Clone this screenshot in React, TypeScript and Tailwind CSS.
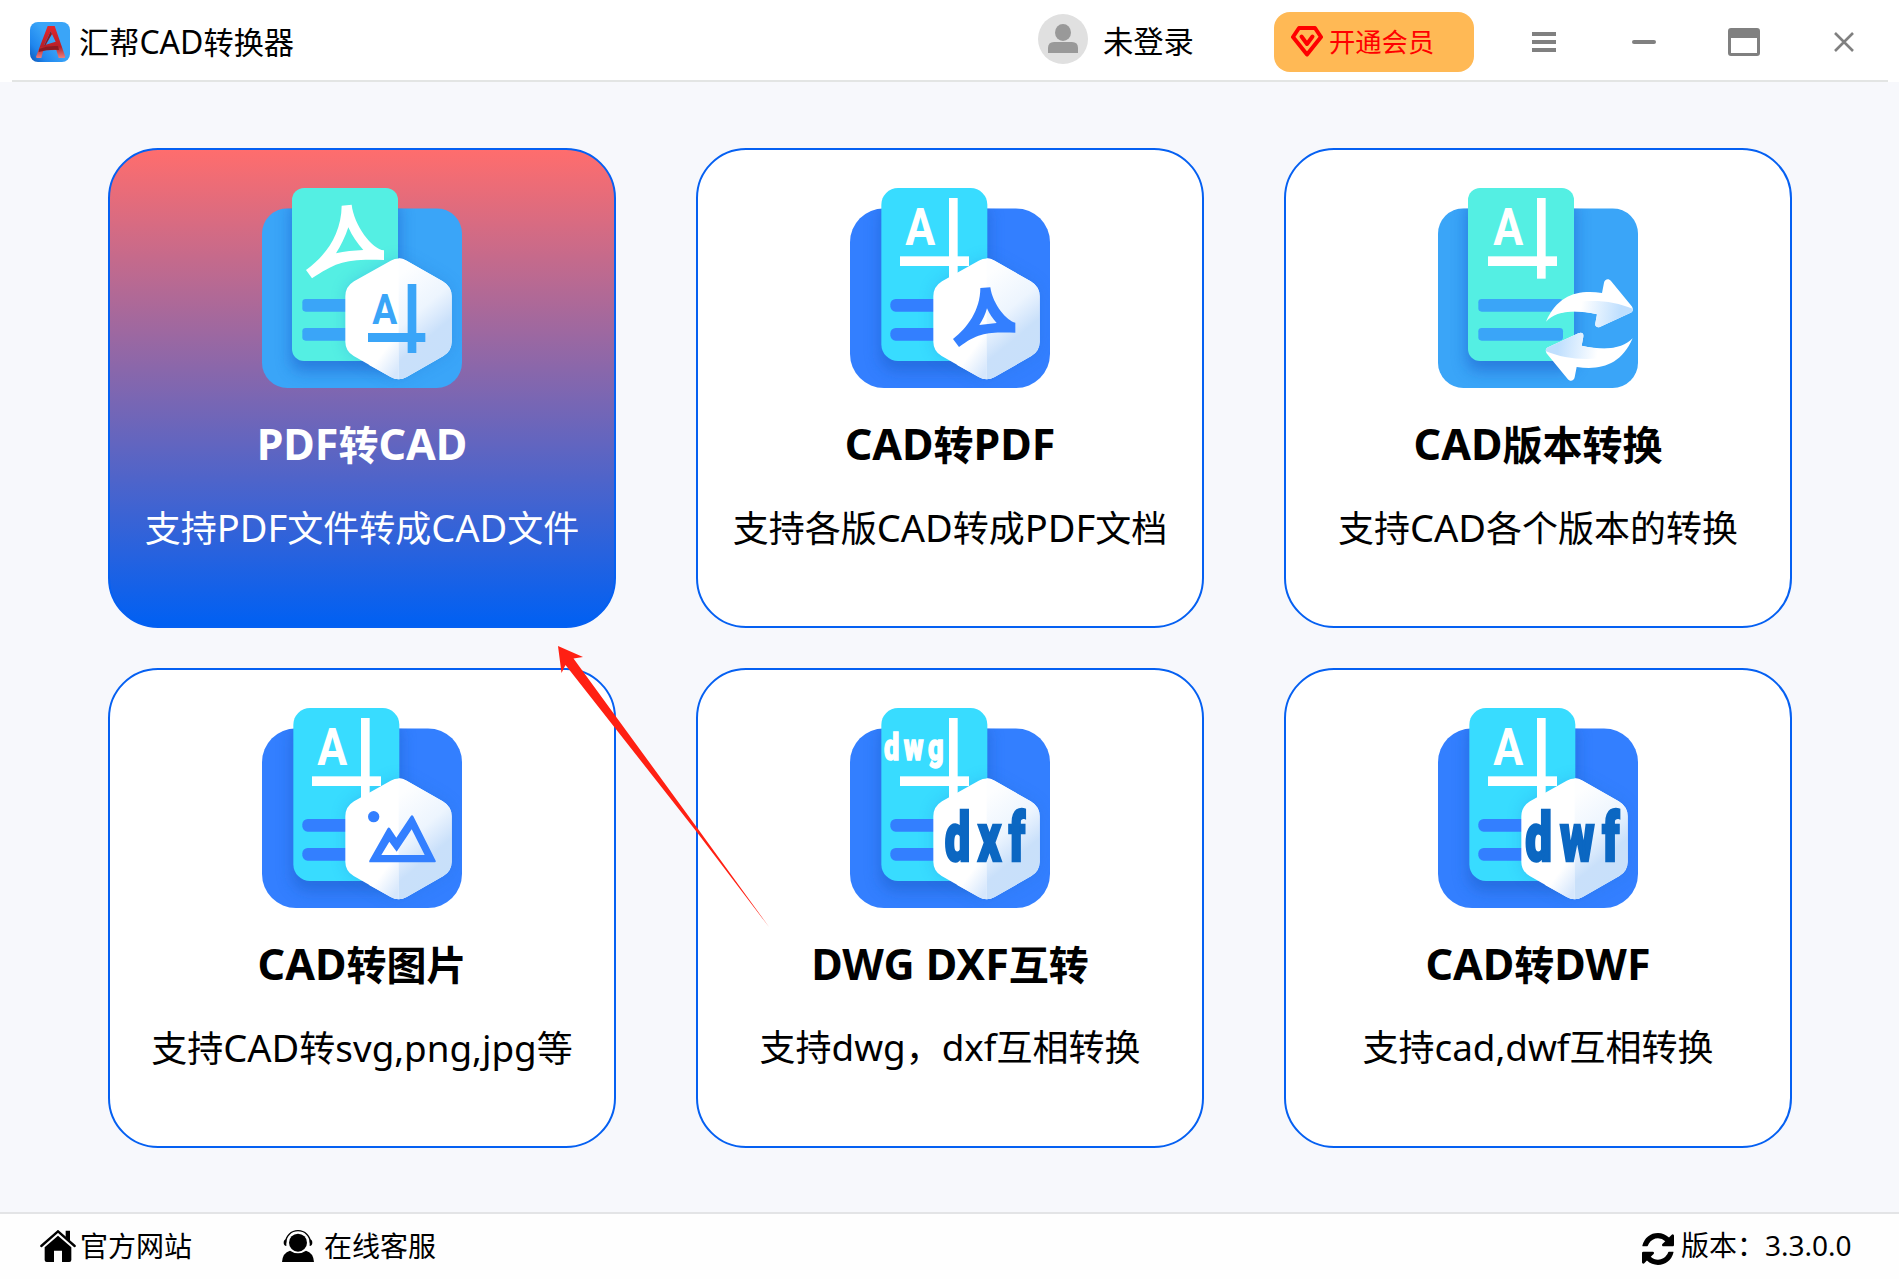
import React from 'react';

type IconKind = 'pdf' | 'toPdf' | 'version' | 'image' | 'dxf' | 'dwf';

const HEX =
  'M386 218 Q410 205 434 218 L542 280 Q569 296 569 325 L569 461 Q569 489 544 504 L434 567 Q410 581 386 567 L275 504 Q250 489 250 461 L250 325 Q250 296 276 280 Z';
const HEX_RIGHT =
  'M410 211 Q422 211 434 218 L542 280 Q569 296 569 325 L569 461 Q569 489 544 504 L434 567 Q422 574 410 574 Z';

function Swoosh({ fill }: { fill: string }) {
  return (
    <path
      fill={fill}
      fillRule="evenodd"
      d="M239 53 L269 50 C276 112 330 184 366 187 L366 216 C250 212 225 222 150 271 L132 246 C190 204 238 140 239 53 Z M259 118 C250 146 236 174 222 196 C248 190 275 187 304 186 C286 166 270 144 259 118 Z"
    />
  );
}

function Word({ text, x, y, width, size, fill }: { text: string; x: number; y: number; width: number; size: number; fill: string }) {
  return (
    <text
      x={x}
      y={y}
      fill={fill}
      stroke={fill}
      strokeWidth={size / 26}
      fontFamily="Roboto, 'Liberation Sans', sans-serif"
      fontWeight="900"
      fontSize={size}
      letterSpacing={size / 6}
      textLength={width}
      lengthAdjust="spacingAndGlyphs"
    >
      {text}
    </text>
  );
}

function FileIcon({ kind }: { kind: IconKind }) {
  const teal = kind === 'pdf' || kind === 'version';
  const base = teal ? '#3aa5f8' : '#337fff';
  const page = teal ? '#54efe3' : '#38dcff';
  const px = teal ? 90 : 94;
  const r = teal ? 36 : 50;
  const id = (s: string) => `${kind}-${s}`;
  return (
    <svg className="block size-[200px] overflow-visible" viewBox="0 0 600 600">
      <defs>
        <clipPath id={id('base')}>
          <rect y="61" width="600" height="539" rx={teal ? 76 : 102} />
        </clipPath>
        <clipPath id={id('page')}>
          <rect x={px} width="318" height="519" rx={r} />
        </clipPath>
        <filter id={id('blur')} x="-30%" y="-30%" width="160%" height="160%">
          <feGaussianBlur stdDeviation="22" />
        </filter>
        <linearGradient id={id('side')} gradientUnits="userSpaceOnUse" x1="420" y1="255" x2="590" y2="460">
          <stop offset="0" stopColor="#fdfeff" />
          <stop offset="0.45" stopColor="#edf5fe" />
          <stop offset="0.62" stopColor="#d9e9fc" />
          <stop offset="0.75" stopColor="#c9e0fa" />
          <stop offset="1" stopColor="#c8e0fa" />
        </linearGradient>
        <linearGradient id={id('fold')} gradientUnits="userSpaceOnUse" x1="365" y1="490" x2="420" y2="530">
          <stop offset="0" stopColor="#ffffff" />
          <stop offset="1" stopColor="#d6e7fc" />
        </linearGradient>
        <linearGradient id={id('arrow')} gradientUnits="userSpaceOnUse" x1="430" y1="350" x2="570" y2="370">
          <stop offset="0" stopColor="#ffffff" />
          <stop offset="0.85" stopColor="#bfdffe" />
        </linearGradient>
      </defs>
      <g clipPath={`url(#${id('base')})`}>
        <rect y="61" width="600" height="539" fill={base} />
        <rect x={px - 4} y="40" width="326" height="510" rx={r} fill="#1c62cc" opacity="0.6" filter={`url(#${id('blur')})`} />
        {kind !== 'version' && <path d={HEX} fill="#1c6fcf" opacity="0.25" filter={`url(#${id('blur')})`} />}
      </g>
      <rect x={px} width="318" height="519" rx={r} fill={page} />
      {kind !== 'version' && (
        <g clipPath={`url(#${id('page')})`}>
          <path d={HEX} fill="#1c7fdf" opacity="0.25" filter={`url(#${id('blur')})`} />
        </g>
      )}
      <rect x="121" y="333" width="254" height="38" rx={teal ? 10 : 16} fill={base} />
      <rect x="121" y="420" width="254" height="38" rx={teal ? 10 : 16} fill={base} />

      {kind === 'pdf' ? (
        <Swoosh fill="#fff" />
      ) : (
        <g fill="#fff">
          <rect x="297" y="30" width="26" height="242" />
          <rect x="150" y="205" width="207" height="29" />
          {kind !== 'dxf' && (
            <text x="166" y="171" fontFamily="Roboto, sans-serif" fontWeight="700" fontSize="153" textLength="90" lengthAdjust="spacingAndGlyphs">
              A
            </text>
          )}
        </g>
      )}
      {kind === 'dxf' && <Word text="dwg" x={102} y={156} width={192} size={113} fill="#fff" />}

      {kind === 'version' ? (
        <>
          {[0, 180].map((a) => (
            <g key={a} transform={`rotate(${a} 454 426)`}>
              <path
                fill="#fff"
                d="M324 401 C360 320 420 305 492 315 L498 284 C500 273 512 270 519 279 L580 353 C587 362 586 370 578 374 L487 416 C477 420 470 416 472 406 L477 379 C400 362 352 372 324 401 Z"
              />
              <path
                fill={`url(#${id('arrow')})`}
                d="M400 344 C470 333 530 340 584 362 C585 368 583 372 578 374 L487 416 C477 420 470 416 472 406 L477 379 C440 370 400 366 370 374 Z"
              />
            </g>
          ))}
        </>
      ) : (
        <>
          <path d={HEX} fill="#fff" />
          <path d="M410 430 L320 530 L386 567 Q398 574 410 574 Z" fill={`url(#${id('fold')})`} />
          <path d={HEX_RIGHT} fill={`url(#${id('side')})`} />
        </>
      )}

      {kind === 'pdf' && (
        <g fill={base}>
          <rect x="437" y="288" width="26" height="207" />
          <rect x="318" y="435" width="172" height="27" />
          <text x="331" y="408" fontFamily="Roboto, sans-serif" fontWeight="700" fontSize="129" textLength="75" lengthAdjust="spacingAndGlyphs">
            A
          </text>
        </g>
      )}
      {kind === 'toPdf' && (
        <path
          fill={base}
          fillRule="evenodd"
          d="M391 300 L421 298 C428 350 472 400 496 404 L496 434 C415 433 388 432 327 477 L309 453 C352 420 391 366 391 300 Z M411 361 C406 380 398 396 388 411 L440 405 C428 392 418 378 411 361 Z"
        />
      )}
      {kind === 'image' && (
        <g fill={base}>
          <circle cx="335" cy="326" r="17" />
          <path
            fillRule="evenodd"
            d="M322 463 Q321 459 323 456 L376 362 Q380 356 384 361 L403 389 L446 325 Q450 319 454 325 L521 458 Q523 462 519 463 Z M358 441 L488 441 L449 364 L404 431 L382 401 Z"
          />
        </g>
      )}
      {kind === 'dxf' && <Word text="dxf" x={284} y={460} width={264} size={203} fill="#0b67c2" />}
      {kind === 'dwf' && <Word text="dwf" x={262} y={460} width={306} size={203} fill="#0b67c2" />}
    </svg>
  );
}

/** Gives the Latin capitals and small letters their own sizes beside the Chinese text. */
function Mixed({ text, upper, lower }: { text: string; upper: string; lower?: string }) {
  return (
    <>
      {text.split(/([A-Z][A-Z ]*|[a-z,]+)/).map((run, i) =>
        i % 2 ? (
          <span key={i} className={/[A-Z]/.test(run) ? upper : lower}>
            {run}
          </span>
        ) : (
          run
        ),
      )}
    </>
  );
}

const cards: { kind: IconKind; title: string; desc: string; active?: boolean }[] = [
  { kind: 'pdf', title: 'PDF转CAD', desc: '支持PDF文件转成CAD文件', active: true },
  { kind: 'toPdf', title: 'CAD转PDF', desc: '支持各版CAD转成PDF文档' },
  { kind: 'version', title: 'CAD版本转换', desc: '支持CAD各个版本的转换' },
  { kind: 'image', title: 'CAD转图片', desc: '支持CAD转svg,png,jpg等' },
  { kind: 'dxf', title: 'DWG DXF互转', desc: '支持dwg，dxf互相转换' },
  { kind: 'dwf', title: 'CAD转DWF', desc: '支持cad,dwf互相转换' },
];

function Card({ kind, title, desc, active }: (typeof cards)[number]) {
  return (
    <button
      className={
        'flex h-[480px] w-[508px] flex-col items-center justify-start rounded-[50px] border-2 border-[#0560f2] pt-[38px] whitespace-nowrap ' +
        (active ? 'bg-[linear-gradient(180deg,#ff6d6d,#0060f3)] text-white' : 'bg-white text-black')
      }
    >
      <FileIcon kind={kind} />
      <span className="mt-[26px] h-[60px] text-[40px] leading-[60px] font-bold">
        <Mixed text={title} upper="text-[43px]" />
      </span>
      <span className="mt-[25px] h-[56px] text-[36px] leading-[56px]">
        <Mixed text={desc} upper="text-[38px]" lower="text-[36.8px]" />
      </span>
    </button>
  );
}

function Logo() {
  return (
    <svg className="block size-10" viewBox="0 0 120 120">
      <defs>
        <linearGradient id="logo-bg" x1="1" y1="0.2" x2="0" y2="1">
          <stop offset="0.4" stopColor="#3aa5f8" />
          <stop offset="0.75" stopColor="#1f86ee" />
          <stop offset="1" stopColor="#0d55b5" />
        </linearGradient>
        <linearGradient id="logo-a" x1="0" y1="0" x2="0" y2="1">
          <stop offset="0" stopColor="#e3262c" />
          <stop offset="0.65" stopColor="#b82027" />
          <stop offset="1" stopColor="#e88080" />
        </linearGradient>
      </defs>
      <rect width="120" height="120" rx="24" fill="url(#logo-bg)" />
      <path fillRule="evenodd" fill="url(#logo-a)" d="M53 12 L74 12 L106 104 L104 108 L86 108 L79 84 L40 85 L34 108 L20 108 L18 104 Z M62 28 L42 70 L77 59 Z" />
      <path fill="#8c1a20" d="M28 80 Q52 70 84 72 L87 84 Q55 82 26 90 Z" />
      <path fill="#8c1a20" d="M62 28 L66 36 L47 69 L42 71 Z" />
    </svg>
  );
}

export default function App() {
  return (
    <div className="relative flex h-[1279px] w-[1899px] flex-col overflow-hidden bg-[#f7f8fc] text-black [font-family:'Noto_Sans','Noto_Sans_CJK_SC',sans-serif]">
      <header className="h-[82px] shrink-0 bg-white">
        <div className="flex h-20 items-center pl-[30px]">
          <div className="mt-1 flex items-center">
            <Logo />
            <h1 className="ml-[9px] text-[30.2px] leading-10 whitespace-nowrap">
              <Mixed text="汇帮CAD转换器" upper="text-[32px]" />
            </h1>
          </div>
          <div className="ml-auto flex h-20 items-center">
            <svg className="mb-[2px] block size-[50px]" viewBox="0 0 50 50">
              <circle cx="25" cy="25" r="25" fill="#e0e0e0" />
              <ellipse cx="25" cy="18.5" rx="8" ry="8.5" fill="#999" />
              <path d="M10 39 V34 Q10 28 16 28 H34 Q40 28 40 34 V39 Z" fill="#999" />
            </svg>
            <span className="mt-1 ml-[15px] w-[91px] text-[30.3px] leading-10 whitespace-nowrap">未登录</span>
            <button className="mt-1 ml-[80px] flex h-[60px] w-[200px] items-center rounded-2xl bg-[#ffb955] pl-[17px] text-[#ff0000]">
              <svg className="mb-[2px] block h-[31px] w-8" viewBox="0 0 32 31" fill="none" stroke="#ff0000" strokeWidth="4" strokeLinejoin="round">
                <path d="M8 2 H24 L30 11 L16 28.5 L2 11 Z" />
                <path d="M10.5 10.5 L16 18 L21.5 10.5" strokeLinecap="round" />
              </svg>
              <span className="ml-[6px] text-[26.3px] leading-9 whitespace-nowrap">开通会员</span>
            </button>
            <svg className="mt-1 ml-[58px] block h-5 w-6" viewBox="0 0 24 20" fill="#808080">
              <path d="M0 0h24v4H0zM0 8h24v4H0zM0 16h24v4H0z" />
            </svg>
            <span className="mt-1 ml-[76px] h-1 w-6 rounded-full bg-[#808080]" />
            <span className="mt-1 ml-[72px] h-7 w-8 rounded-[3px] border-[3px] border-t-[10px] border-[#808080]" />
            <svg className="mt-1 mr-[45px] ml-[74px] block size-5" viewBox="0 0 20 20" stroke="#808080" strokeWidth="2.6">
              <path d="M1 1 L19 19 M19 1 L1 19" />
            </svg>
          </div>
        </div>
        <div className="mr-[11px] ml-3 h-[2px] bg-[#e3e5e4]" />
      </header>

      <main className="grid flex-1 grid-cols-[repeat(3,508px)] content-start gap-x-20 gap-y-10 pt-[66px] pl-[108px]">
        {cards.map((c) => (
          <Card key={c.kind} {...c} />
        ))}
      </main>

      <footer className="flex h-[67px] shrink-0 items-center border-t-2 border-[#e3e4e6] bg-[#fefefe] pb-[2px] pl-10 text-[28px] leading-10 whitespace-nowrap">
        <svg className="block h-8 w-9" viewBox="0 0 108 96">
          <path d="M4 48 L54 4 L104 48" fill="none" stroke="#000" strokeWidth="7" strokeLinecap="round" />
          <path d="M77 2 H90 V34 L77 22 Z" />
          <path d="M54 17 L94 52 V90 Q94 96 88 96 H66 V62 H42 V96 H20 Q14 96 14 90 V52 Z" />
        </svg>
        <span className="ml-[4px] w-[113px]">官方网站</span>
        <svg className="ml-[89px] block size-8" viewBox="0 0 96 96">
          <path d="M11 38 A37 36 0 0 1 85 38" fill="none" stroke="#000" strokeWidth="4" />
          <ellipse cx="48" cy="38" rx="27" ry="27" />
          <path d="M13 28 Q5 29 5 38 Q5 47 13 48 Z M83 28 Q91 29 91 38 Q91 47 83 48 Z" />
          <path d="M0 96 Q2 68 24 62 Q48 78 72 62 Q94 68 96 96 Z" />
        </svg>
        <span className="ml-[10px] w-[112px]">在线客服</span>
        <svg className="mt-[7px] ml-auto block size-8" viewBox="0 0 1536 1536">
          <path d="M1511 928q0 5-1 7-64 268-268 434.500T764 1536q-146 0-282.500-55T238 1324l-129 129q-19 19-45 19t-45-19-19-45V960q0-26 19-45t45-19h448q26 0 45 19t19 45-19 45l-137 137q71 66 161 102t187 36q134 0 250-65t186-179q11-17 53-117 8-23 30-23h192q13 0 22.500 9.500t9.500 22.500zM1536 128v448q0 26-19 45t-45 19h-448q-26 0-45-19t-19-45 19-45l138-138Q969 256 768 256q-134 0-250 65T332 500q-11 17-53 117-8 23-30 23H50q-13 0-22.500-9.500T18 608v-7q65-268 270-434.500T768 0q146 0 284 55.500T1297 212l130-129q19-19 45-19t45 19 19 45z" />
        </svg>
        <span className="mb-[2px] ml-[7px] w-[218px]">版本：3.3.0.0</span>
      </footer>

      <svg className="pointer-events-none absolute top-[640px] left-[550px] h-[300px] w-[240px]" viewBox="550 640 240 300">
        <path d="M558 646 L583 657 L573.500 658.500 L698 829 L769 927 L696 831 L565.500 665 L561.500 673 Z" fill="#ff2013" />
      </svg>
    </div>
  );
}
